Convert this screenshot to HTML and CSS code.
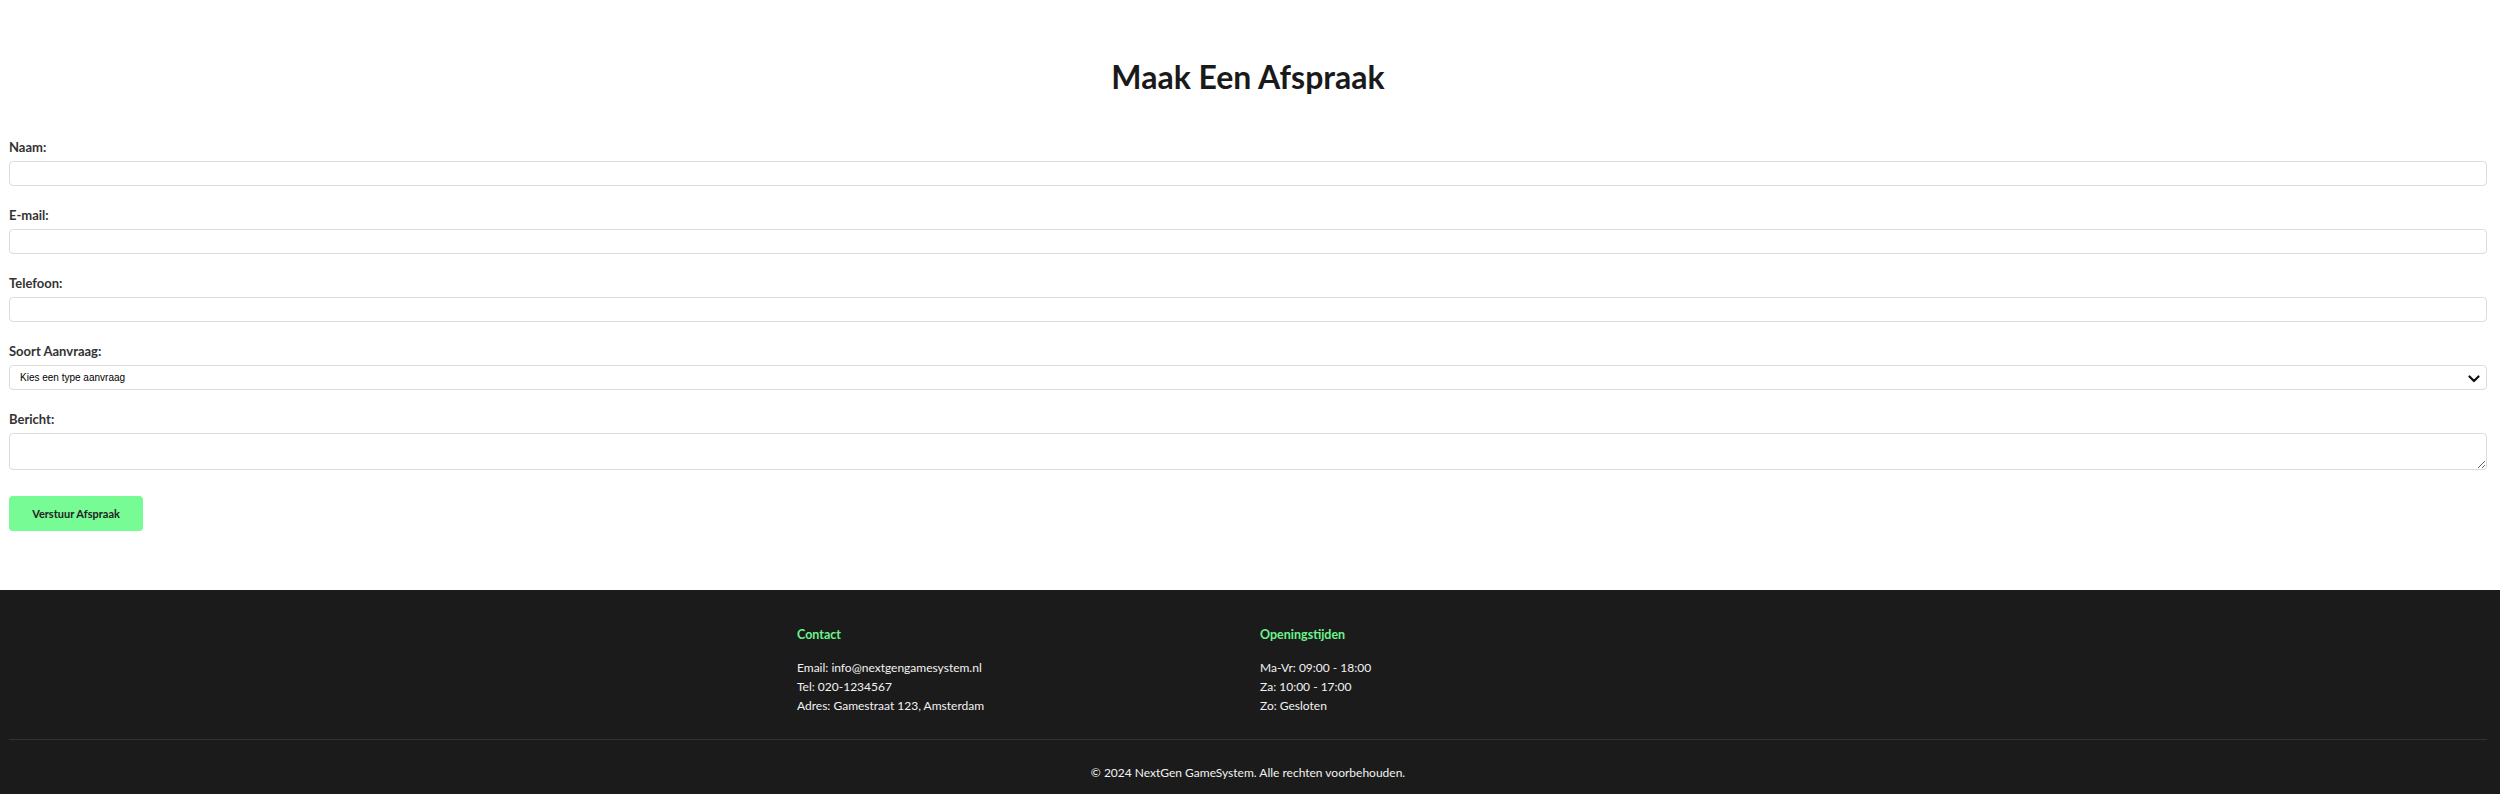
FILE: index.html
```html
<!DOCTYPE html>
<html lang="nl">
<head>
<meta charset="utf-8">
<title>Maak Een Afspraak</title>
<link rel="stylesheet" href="styles.css">
</head>
<body>
<main class="booking">
  <h1 class="booking-title">Maak Een Afspraak</h1>
  <form class="booking-form">
    <div class="form-group">
      <label class="form-label" for="naam">Naam:</label>
      <input class="form-control" type="text" id="naam">
    </div>
    <div class="form-group">
      <label class="form-label" for="email">E-mail:</label>
      <input class="form-control" type="email" id="email">
    </div>
    <div class="form-group">
      <label class="form-label" for="tel">Telefoon:</label>
      <input class="form-control" type="tel" id="tel">
    </div>
    <div class="form-group">
      <label class="form-label" for="soort">Soort Aanvraag:</label>
      <div class="select-wrap">
        <select class="form-select" id="soort">
          <option>Kies een type aanvraag</option>
        </select>
        <svg class="select-arrow" width="12" height="8" viewBox="0 0 12 8"><polyline points="1.5,1.5 6,6 10.5,1.5" fill="none" stroke="#111" stroke-width="2.2" stroke-linecap="round" stroke-linejoin="round"/></svg>
      </div>
    </div>
    <div class="form-group">
      <label class="form-label" for="bericht">Bericht:</label>
      <textarea class="form-textarea" id="bericht"></textarea>
    </div>
    <button class="submit-btn" type="button">Verstuur Afspraak</button>
  </form>
</main>
<footer class="site-footer">
  <div class="footer-cols">
    <div class="footer-col">
      <h3 class="footer-heading">Contact</h3>
      <p class="footer-line">Email: info@nextgengamesystem.nl</p>
      <p class="footer-line">Tel: 020-1234567</p>
      <p class="footer-line">Adres: Gamestraat 123, Amsterdam</p>
    </div>
    <div class="footer-col">
      <h3 class="footer-heading">Openingstijden</h3>
      <p class="footer-line">Ma-Vr: 09:00 - 18:00</p>
      <p class="footer-line">Za: 10:00 - 17:00</p>
      <p class="footer-line">Zo: Gesloten</p>
    </div>
  </div>
  <div class="footer-bottom">
    <p class="copyright">© 2024 NextGen GameSystem. Alle rechten voorbehouden.</p>
  </div>
</footer>
</body>
</html>
```

FILE: styles.css
```css
* { box-sizing: border-box; }

body {
  margin: 0;
  background: #ffffff;
  font-family: "Lato", "Noto Sans", sans-serif;
  color: #333;
}

.booking {
  padding: 57px 13px 59px 9px;
}

.booking-title {
  margin: 0 0 42px;
  font-size: 32px;
  line-height: 40px;
  font-weight: 700;
  text-align: center;
  color: #1a1a1a;
}

.form-group {
  margin-bottom: 21px;
}

.form-label {
  display: block;
  font-size: 13px;
  line-height: 16px;
  font-weight: 700;
  color: #333;
  margin-bottom: 6px;
}

.form-control {
  display: block;
  width: 100%;
  height: 25px;
  border: 1px solid #dcdcdc;
  border-radius: 4px;
  background: #fff;
  padding: 4px 10px;
  font-size: 13px;
}

.select-wrap {
  position: relative;
}

.form-select {
  display: block;
  width: 100%;
  height: 25px;
  border: 1px solid #dcdcdc;
  border-radius: 4px;
  background: #fff;
  padding: 0 10px;
  font-family: "Liberation Sans", Arial, sans-serif;
  font-size: 10px;
  color: #000;
  -webkit-appearance: none;
  appearance: none;
}

.select-arrow {
  position: absolute;
  right: 7px;
  top: 10px;
}

.form-textarea {
  display: block;
  width: 100%;
  height: 37px;
  border: 1px solid #dcdcdc;
  border-radius: 4px;
  background: #fff;
  padding: 5px 10px;
  font-size: 13px;
  resize: vertical;
}

.submit-btn {
  display: block;
  margin-top: 26px;
  width: 134px;
  height: 35px;
  border: none;
  border-radius: 4px;
  background: #77fb95;
  color: #222;
  font-family: "Lato", "Noto Sans", sans-serif;
  font-size: 11px;
  font-weight: 700;
}

.site-footer {
  background: #1b1b1b;
  color: #f2f2f2;
  padding: 37px 13px 12px 9px;
}

.footer-cols {
  display: grid;
  grid-template-columns: 463px 439px;
  justify-content: center;
  padding-bottom: 24px;
  border-bottom: 1px solid #333;
}

.footer-heading {
  margin: 0 0 15px;
  font-size: 12.5px;
  line-height: 16px;
  font-weight: 700;
  color: #6cf38b;
}

.footer-line {
  margin: 0;
  font-size: 12px;
  line-height: 19px;
}

.footer-bottom {
  padding-top: 23px;
  text-align: center;
}

.copyright {
  margin: 0;
  font-size: 12px;
  line-height: 19px;
}
```
